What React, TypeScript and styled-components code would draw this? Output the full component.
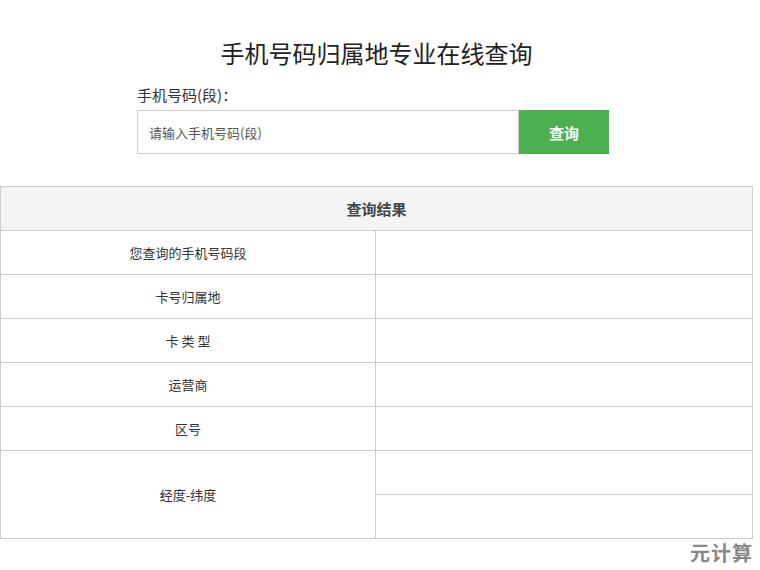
import React from "react";
import styled, { createGlobalStyle } from "styled-components";

const G = createGlobalStyle`
  body { margin: 0; background: #fff; font-family: "Noto Sans CJK SC", "Liberation Sans", sans-serif; color: #333; }
`;
const Page = styled.div` position: relative; width: 760px; height: 570px; `;
const Title = styled.h1`
  margin: 0; padding-top: 36px; height: 34px; line-height: 34px;
  text-align: center; font-size: 24px; font-weight: 400; color: #222; width: 753px;
`;
const Form = styled.div` margin: 14px 0 0 137px; width: 472px; `;
const Label = styled.div` font-size: 15px; line-height: 22px; color: #333; margin-bottom: 4px; `;
const Row = styled.div` display: flex; height: 44px; `;
const Input = styled.input`
  flex: 1; box-sizing: border-box; height: 44px; border: 1px solid #ccc; padding: 0 11px;
  font-size: 13px; font-family: inherit; outline: none;
  &::placeholder { color: #555; }
`;
const Btn = styled.button`
  width: 90px; height: 44px; border: none; background: #4caf50; color: #fff;
  font-size: 15px; font-family: inherit; font-weight: 700;
`;
const Table = styled.div`
  margin-top: 32px; width: 753px; box-sizing: border-box; border: 1px solid #ccc; border-bottom: none;
`;
const Head = styled.div`
  height: 43px; background: #f4f4f4; border-bottom: 1px solid #ccc;
  display: flex; align-items: center; justify-content: center; font-size: 15px; font-weight: 700; color: #444;
`;
const TRow = styled.div`
  display: grid; grid-template-columns: 375px 1fr; border-bottom: 1px solid #ccc;
`;
const Key = styled.div<{ $h: number }>`
  height: ${p => p.$h}px; display: flex; align-items: center; justify-content: center;
  border-right: 1px solid #ccc; font-size: 13px; color: #333; white-space: pre;
`;
const Cells = styled.div` display: flex; flex-direction: column; `;
const Cell = styled.div<{ $line?: boolean }>`
  height: 43px; ${p => p.$line ? "border-bottom: 1px solid #ccc;" : ""}
`;
const Mark = styled.div`
  position: absolute; right: 7px; top: 538px; font-size: 20px; font-weight: 700; color: #888; letter-spacing: 1px;
`;

const rows = ["您查询的手机号码段", "卡号归属地", "卡 类 型", "运营商", "区号"];

export default function App() {
  return (
    <Page>
      <G />
      <Title>手机号码归属地专业在线查询</Title>
      <Form>
        <Label>手机号码(段)：</Label>
        <Row>
          <Input placeholder="请输入手机号码(段)" />
          <Btn>查询</Btn>
        </Row>
      </Form>
      <Table>
        <Head>查询结果</Head>
        {rows.map(r => (
          <TRow key={r}><Key $h={43}>{r}</Key><Cells><Cell /></Cells></TRow>
        ))}
        <TRow><Key $h={87}>经度-纬度</Key><Cells><Cell $line /><Cell /></Cells></TRow>
      </Table>
      <Mark>元计算</Mark>
    </Page>
  );
}
